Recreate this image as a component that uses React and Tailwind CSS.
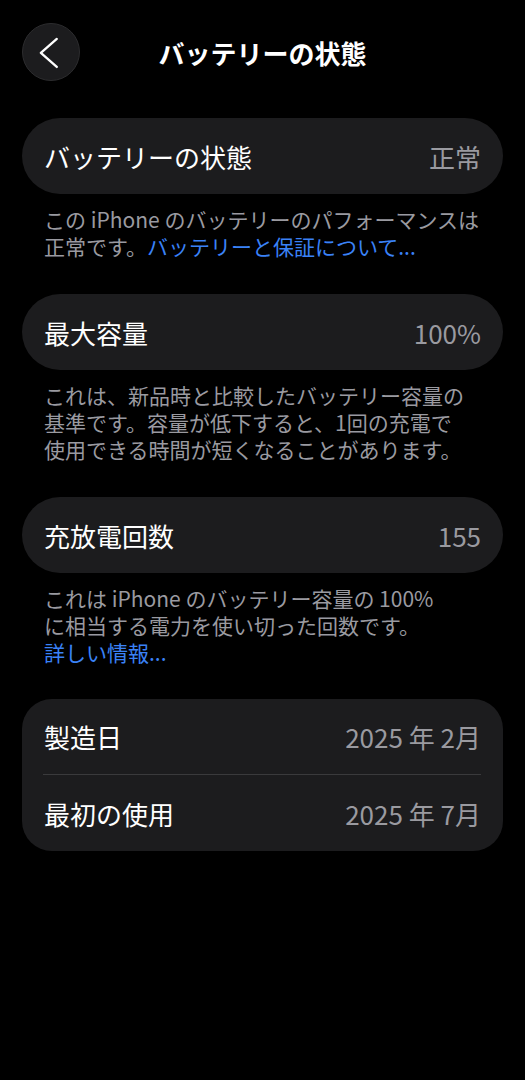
import React from "react";

const font = { fontFamily: '"Noto Sans CJK JP", "Noto Sans", sans-serif' };

function Row({ label, value, className = "" }) {
  return (
    <div className={`flex items-center justify-between px-[22px] ${className}`}>
      <span className="text-[26px] text-white">{label}</span>
      <span className="text-[26px] text-[#9a9aa0]">{value}</span>
    </div>
  );
}

function Note({ children }) {
  return (
    <p className="mt-[12px] px-[44px] text-[21px] leading-[27px] text-[#9a9aa0]">
      {children}
    </p>
  );
}

export default function App() {
  return (
    <div className="min-h-screen bg-black pb-10" style={font}>
      {/* header */}
      <div className="grid grid-cols-[58px_1fr_58px] items-center px-[22px] pt-[23px]">
        <button className="flex h-[58px] w-[58px] items-center justify-center rounded-full border border-[#2c2c2e] bg-[#1c1c1e]">
          <svg width="58" height="58" viewBox="0 0 58 58" fill="none">
            <path
              d="M35 15.5 L18.5 30 L35 44.5"
              stroke="white"
              strokeWidth="2.4"
              strokeLinecap="round"
              strokeLinejoin="round"
            />
          </svg>
        </button>
        <h1 className="text-center text-[26px] font-semibold text-white">バッテリーの状態</h1>
        <div />
      </div>

      {/* health */}
      <div className="mx-[22px] mt-[37px] rounded-full bg-[#1c1c1e]">
        <Row label="バッテリーの状態" value="正常" className="h-[76px]" />
      </div>
      <Note>
        この iPhone のバッテリーのパフォーマンスは
        <br />
        正常です。<span className="text-[#3a82f7]">バッテリーと保証について...</span>
      </Note>

      {/* capacity */}
      <div className="mx-[22px] mt-[34px] rounded-full bg-[#1c1c1e]">
        <Row label="最大容量" value="100%" className="h-[76px]" />
      </div>
      <Note>
        これは、新品時と比較したバッテリー容量の
        <br />
        基準です。容量が低下すると、1回の充電で
        <br />
        使用できる時間が短くなることがあります。
      </Note>

      {/* cycle count */}
      <div className="mx-[22px] mt-[34px] rounded-full bg-[#1c1c1e]">
        <Row label="充放電回数" value="155" className="h-[76px]" />
      </div>
      <Note>
        これは iPhone のバッテリー容量の 100%
        <br />
        に相当する電力を使い切った回数です。
        <br />
        <span className="text-[#3a82f7]">詳しい情報...</span>
      </Note>

      {/* dates */}
      <div className="mx-[22px] mt-[33px] rounded-[30px] bg-[#1c1c1e]">
        <Row label="製造日" value="2025 年 2月" className="h-[75px]" />
        <div className="ml-[21px] mr-[22px] h-px bg-[#3a3a3c]" />
        <Row label="最初の使用" value="2025 年 7月" className="h-[76px]" />
      </div>
    </div>
  );
}
